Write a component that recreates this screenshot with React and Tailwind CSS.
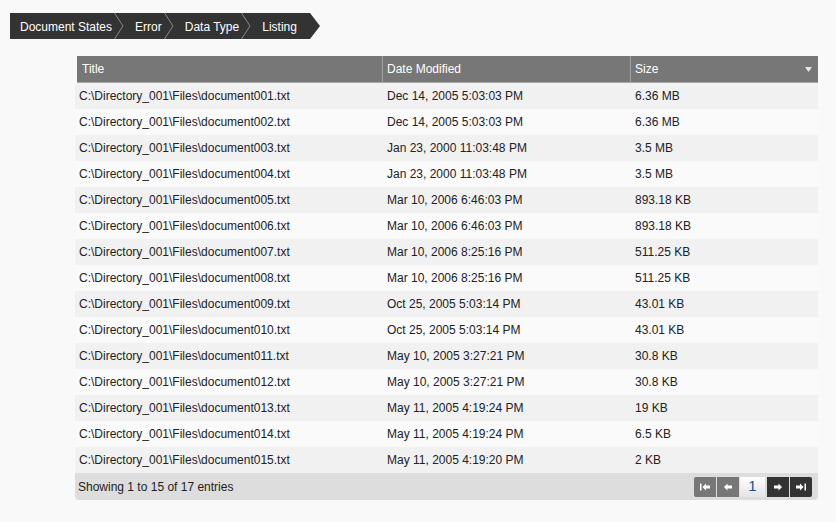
import React from 'react';

const rows = [
    ['C:\\Directory_001\\Files\\document001.txt', 'Dec 14, 2005 5:03:03 PM', '6.36 MB'],
    ['C:\\Directory_001\\Files\\document002.txt', 'Dec 14, 2005 5:03:03 PM', '6.36 MB'],
    ['C:\\Directory_001\\Files\\document003.txt', 'Jan 23, 2000 11:03:48 PM', '3.5 MB'],
    ['C:\\Directory_001\\Files\\document004.txt', 'Jan 23, 2000 11:03:48 PM', '3.5 MB'],
    ['C:\\Directory_001\\Files\\document005.txt', 'Mar 10, 2006 6:46:03 PM', '893.18 KB'],
    ['C:\\Directory_001\\Files\\document006.txt', 'Mar 10, 2006 6:46:03 PM', '893.18 KB'],
    ['C:\\Directory_001\\Files\\document007.txt', 'Mar 10, 2006 8:25:16 PM', '511.25 KB'],
    ['C:\\Directory_001\\Files\\document008.txt', 'Mar 10, 2006 8:25:16 PM', '511.25 KB'],
    ['C:\\Directory_001\\Files\\document009.txt', 'Oct 25, 2005 5:03:14 PM', '43.01 KB'],
    ['C:\\Directory_001\\Files\\document010.txt', 'Oct 25, 2005 5:03:14 PM', '43.01 KB'],
    ['C:\\Directory_001\\Files\\document011.txt', 'May 10, 2005 3:27:21 PM', '30.8 KB'],
    ['C:\\Directory_001\\Files\\document012.txt', 'May 10, 2005 3:27:21 PM', '30.8 KB'],
    ['C:\\Directory_001\\Files\\document013.txt', 'May 11, 2005 4:19:24 PM', '19 KB'],
    ['C:\\Directory_001\\Files\\document014.txt', 'May 11, 2005 4:19:24 PM', '6.5 KB'],
    ['C:\\Directory_001\\Files\\document015.txt', 'May 11, 2005 4:19:20 PM', '2 KB'],
];

const crumbs = ['Document States', 'Error', 'Data Type', 'Listing'];

const Chevron = () => (
    <svg width="10" height="26" viewBox="0 0 10 26" className="shrink-0">
        <polyline points="0.5,0 9,13 0.5,26" fill="none" stroke="#8a8a8a" strokeWidth="1" />
    </svg>
);

const Breadcrumb = () => (
    <div className="flex items-stretch h-[26px]">
        <div className="flex items-center bg-[#333333] pl-[10px] pr-[13px] pt-[1px] text-white text-[12px]">
            {crumbs.map((c, i) => (
                <React.Fragment key={c}>
                    {i > 0 && <span className="pl-[11px]" />}
                    <span className="whitespace-nowrap">{c}</span>
                    {i < crumbs.length - 1 && <span className="pl-[2px] -mt-[1px] flex"><Chevron /></span>}
                </React.Fragment>
            ))}
        </div>
        <svg width="10" height="26" viewBox="0 0 10 26" className="shrink-0">
            <polygon points="0,0 10,13 0,26" fill="#333333" />
        </svg>
    </div>
);

const PageBtn = ({ dark, children, className = '' }) => (
    <div className={`w-[22px] h-[20px] flex items-center justify-center ${dark ? 'bg-[#333333]' : 'bg-[#777777]'} ${className}`}>
        {children}
    </div>
);

const Arrow = ({ dir, bar }) => (
    <svg width="10" height="8" viewBox="0 0 10 8">
        {dir === 'left' ? (
            <>
                {bar && <rect x="0" y="0.5" width="1.5" height="7" fill="#fff" />}
                <polygon points={bar ? '2.5,4 6,0.5 6,2.5 10,2.5 10,5.5 6,5.5 6,7.5' : '1,4 4.5,0.5 4.5,2.5 9,2.5 9,5.5 4.5,5.5 4.5,7.5'} fill="#fff" />
            </>
        ) : (
            <>
                <polygon points={bar ? '7.5,4 4,0.5 4,2.5 0,2.5 0,5.5 4,5.5 4,7.5' : '9,4 5.5,0.5 5.5,2.5 1,2.5 1,5.5 5.5,5.5 5.5,7.5'} fill="#fff" />
                {bar && <rect x="8.5" y="0.5" width="1.5" height="7" fill="#fff" />}
            </>
        )}
    </svg>
);

export default function App() {
    return (
        <div className="w-[836px] h-[522px] bg-[#f9f9f9] font-['Liberation_Sans',Arial,sans-serif] text-[12px] text-[#222222] overflow-hidden">
            {/* Breadcrumb */}
            <div className="pt-[13px] pl-[10px]">
                <Breadcrumb />
            </div>

            {/* Table */}
            <div className="mt-[17px] ml-[75px] w-[743px]">
                <div className="ml-[2px] grid grid-cols-[306px_248px_1fr] h-[27px] bg-[#777777] text-white border-b border-[#a8a8a8]">
                    <div className="flex items-center pl-[5px] border-r border-[#a0a0a0]">Title</div>
                    <div className="flex items-center pl-[4px] border-r border-[#a0a0a0]">Date Modified</div>
                    <div className="flex items-center justify-between pl-[4px] pr-[6px]">
                        <span>Size</span>
                        <svg width="7" height="5" viewBox="0 0 7 5"><polygon points="0,0 7,0 3.5,5" fill="#e6e6e6" /></svg>
                    </div>
                </div>
                {rows.map((r, i) => (
                    <div
                        key={r[0]}
                        className={`grid grid-cols-[308px_248px_1fr] h-[26px] items-center ${i % 2 === 0 ? 'bg-[#f1f1f1]' : 'bg-[#fafafa]'}`}
                    >
                        <div className="pl-[4px] whitespace-nowrap">{r[0]}</div>
                        <div className="pl-[4px] whitespace-nowrap">{r[1]}</div>
                        <div className="pl-[4px] whitespace-nowrap">{r[2]}</div>
                    </div>
                ))}
                <div className="flex items-center justify-between h-[27px] bg-[#dddddd] rounded-b-[4px] pl-[3px] pr-[6px]">
                    <span>Showing 1 to 15 of 17 entries</span>
                    <div className="flex items-center gap-[1px]">
                        <PageBtn className="rounded-l-[2px]"><Arrow dir="left" bar /></PageBtn>
                        <PageBtn><Arrow dir="left" /></PageBtn>
                        <div className="w-[25px] h-[20px] flex items-center justify-center bg-gradient-to-b from-white to-[#e4e4e4] text-[#1a4f9c] text-[15px]">1</div>
                        <PageBtn dark className="ml-[1px]"><Arrow dir="right" /></PageBtn>
                        <PageBtn dark className="rounded-r-[2px] w-[21px]"><Arrow dir="right" bar /></PageBtn>
                    </div>
                </div>
            </div>
        </div>
    );
}
